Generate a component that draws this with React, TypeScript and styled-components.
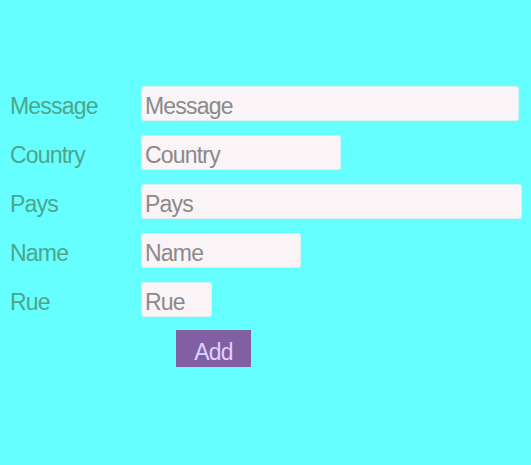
import React from "react";
import styled, { createGlobalStyle } from "styled-components";

const Global = createGlobalStyle`
  html, body { margin: 0; padding: 0; background: #66ffff; }
  body { font-family: "Liberation Sans", Arial, sans-serif; }
`;

const Page = styled.div`
  width: 531px;
  height: 465px;
  background: #66ffff;
  padding: 86px 0 0 10px;
  box-sizing: border-box;
`;

const Form = styled.form`
  display: flex;
  flex-direction: column;
  gap: 14px;
`;

const Row = styled.div`
  display: flex;
  align-items: center;
  height: 35px;
`;

const Label = styled.label`
  width: 131px;
  font-size: 23px;
  line-height: 26px;
  letter-spacing: -0.8px;
  color: #4ea58b;
  padding-top: 5px;
`;

const Input = styled.input<{ $w: number }>`
  width: ${(p) => p.$w}px;
  height: 35px;
  box-sizing: border-box;
  background: #faf4f7;
  border: 1px solid #d8f0f0;
  border-radius: 3px;
  padding: 5px 3px 0;
  font-family: "Liberation Sans", Arial, sans-serif;
  font-size: 23px;
  letter-spacing: -0.8px;
  color: #555;
  outline: none;
  &::placeholder { color: #8a8a8a; }
`;

const ButtonRow = styled.div`
  padding-left: 166px;
  margin-top: -1px;
`;

const Button = styled.button`
  width: 75px;
  height: 37px;
  background: #825fa2;
  border: none;
  color: #dcd2ff;
  font-family: "Liberation Sans", Arial, sans-serif;
  font-size: 23px;
  letter-spacing: -0.8px;
  padding: 7px 0 0;
`;

const fields = [
  { name: "Message", w: 378 },
  { name: "Country", w: 200 },
  { name: "Pays", w: 381 },
  { name: "Name", w: 160 },
  { name: "Rue", w: 71 },
];

export default function App() {
  return (
    <Page>
      <Global />
      <Form onSubmit={(e) => e.preventDefault()}>
        {fields.map((f) => (
          <Row key={f.name}>
            <Label>{f.name}</Label>
            <Input $w={f.w} placeholder={f.name} />
          </Row>
        ))}
        <ButtonRow>
          <Button type="submit">Add</Button>
        </ButtonRow>
      </Form>
    </Page>
  );
}
